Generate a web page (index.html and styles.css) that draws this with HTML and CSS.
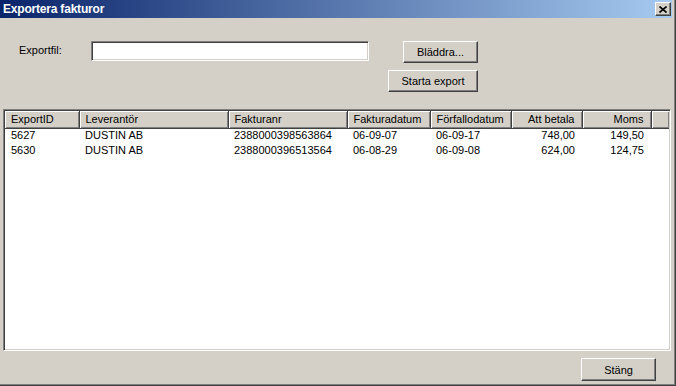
FILE: index.html
```html
<!DOCTYPE html>
<html lang="sv">
<head>
  <meta charset="UTF-8" />
  <title>Exportera fakturor</title>
  <link rel="stylesheet" href="styles.css">
</head>
<body>
  <div class="window">
    <div class="frame">
      <div class="titlebar">
        <span class="title">Exportera fakturor</span>
        <button class="close" type="button" aria-label="Stäng">
          <svg width="8" height="7" viewBox="0 0 8 7">
            <path d="M0.5 0.5 L7.5 6.5 M7.5 0.5 L0.5 6.5" stroke="#000" stroke-width="1.6" fill="none"/>
          </svg>
        </button>
      </div>

      <div class="form-area">
        <div class="row">
          <label for="exportfil" class="lbl">Exportfil:</label>
          <input type="text" id="exportfil" class="filebox">
          <button type="button" class="btn browse">Bläddra...</button>
        </div>
        <div class="row end">
          <button type="button" class="btn start">Starta export</button>
        </div>
      </div>

      <div class="listview">
        <table>
          <colgroup>
            <col class="c1"><col class="c2"><col class="c3"><col class="c4">
            <col class="c5"><col class="c6"><col class="c7"><col>
          </colgroup>
          <thead>
            <tr>
              <th>ExportID</th>
              <th>Leverantör</th>
              <th>Fakturanr</th>
              <th>Fakturadatum</th>
              <th>Förfallodatum</th>
              <th class="num">Att betala</th>
              <th class="num">Moms</th>
              <th class="filler"></th>
            </tr>
          </thead>
          <tbody>
            <tr>
              <td>5627</td>
              <td>DUSTIN AB</td>
              <td>2388000398563864</td>
              <td>06-09-07</td>
              <td>06-09-17</td>
              <td class="num">748,00</td>
              <td class="num">149,50</td>
              <td></td>
            </tr>
            <tr>
              <td>5630</td>
              <td>DUSTIN AB</td>
              <td>2388000396513564</td>
              <td>06-08-29</td>
              <td>06-09-08</td>
              <td class="num">624,00</td>
              <td class="num">124,75</td>
              <td></td>
            </tr>
          </tbody>
        </table>
      </div>

      <div class="footer">
        <button type="button" class="btn close-btn">Stäng</button>
      </div>
    </div>
  </div>
</body>
</html>
```

FILE: styles.css
```css
body {
  margin: 0;
  background-color: #d4d0c8;
  font-family: 'Liberation Sans', Arial, sans-serif;
  font-size: 11px;
  color: #000;
}

.window {
  width: 676px;
  height: 386px;
  box-sizing: border-box;
  border-right: 1px solid #404040;
  border-bottom: 1px solid #404040;
}

.frame {
  height: 100%;
  box-sizing: border-box;
  border-right: 1px solid #808080;
  border-bottom: 1px solid #808080;
  padding-right: 2px;
  padding-bottom: 2px;
  display: flex;
  flex-direction: column;
}

.titlebar {
  height: 18px;
  display: flex;
  align-items: center;
  padding-left: 3px;
  padding-right: 1px;
  background: linear-gradient(to right, #0a246a, #a6caf0);
  flex: none;
}

.title {
  color: #fff;
  font-family: 'Liberation Sans', Arial, sans-serif;
  font-weight: bold;
  font-size: 12px;
  letter-spacing: -0.2px;
  flex: 1;
}

.close {
  width: 16px;
  height: 14px;
  padding: 0;
  display: flex;
  align-items: center;
  justify-content: center;
  background-color: #d4d0c8;
  border: 1px solid;
  border-color: #fff #404040 #404040 #fff;
  box-shadow: inset -1px -1px #808080;
}

.form-area {
  padding: 23px 0 0 19px;
  width: 459px;
  flex: none;
}

.row {
  display: flex;
  align-items: flex-start;
}

.row.end {
  justify-content: flex-end;
  margin-top: 7px;
}

.lbl {
  width: 72px;
  padding-top: 3px;
  flex: none;
}

.filebox {
  width: 278px;
  height: 20px;
  box-sizing: border-box;
  margin: 0;
  padding: 1px 3px;
  font-family: inherit;
  font-size: 11px;
  background: #fff;
  border: 1px solid;
  border-color: #808080 #fff #fff #808080;
  box-shadow: inset 1px 1px #404040, inset -1px -1px #d4d0c8;
  outline: none;
}

.btn {
  height: 22px;
  box-sizing: border-box;
  margin: 0;
  padding: 0;
  font-family: inherit;
  font-size: 11px;
  color: #000;
  background-color: #d4d0c8;
  border: 1px solid;
  border-color: #fff #404040 #404040 #fff;
  box-shadow: inset -1px -1px #808080;
  cursor: pointer;
}

.browse {
  width: 75px;
  margin-left: auto;
}

.start {
  width: 90px;
}

.listview {
  margin: 17px 1px 0 3px;
  height: 242px;
  box-sizing: border-box;
  background: #fff;
  border: 1px solid;
  border-color: #808080 #fff #fff #808080;
  box-shadow: inset 1px 1px #404040, inset -1px -1px #d4d0c8;
  padding: 1px;
  overflow: hidden;
  flex: none;
}

table {
  width: 100%;
  border-collapse: collapse;
  border-spacing: 0;
  table-layout: fixed;
}

.c1 { width: 74px; }
.c2 { width: 149px; }
.c3 { width: 119px; }
.c4 { width: 83px; }
.c5 { width: 81px; }
.c6 { width: 71px; }
.c7 { width: 69px; }

th {
  height: 17px;
  box-sizing: border-box;
  padding: 0 6px;
  line-height: 15px;
  font-weight: normal;
  text-align: left;
  white-space: nowrap;
  background-color: #d4d0c8;
  border-right: 1px solid #404040;
  border-bottom: 1px solid #404040;
  box-shadow: inset 1px 1px #fff, inset -1px -1px #808080;
}

th.filler {
  border-right: none;
}

td {
  height: 16px;
  box-sizing: border-box;
  padding: 0 6px;
  line-height: 12px;
  vertical-align: top;
  white-space: nowrap;
  overflow: hidden;
}

th.num, td.num {
  text-align: right;
  padding-right: 7px;
}

.footer {
  display: flex;
  justify-content: flex-end;
  padding: 7px 16px 0 0;
}

.close-btn {
  width: 75px;
  height: 23px;
}
```
